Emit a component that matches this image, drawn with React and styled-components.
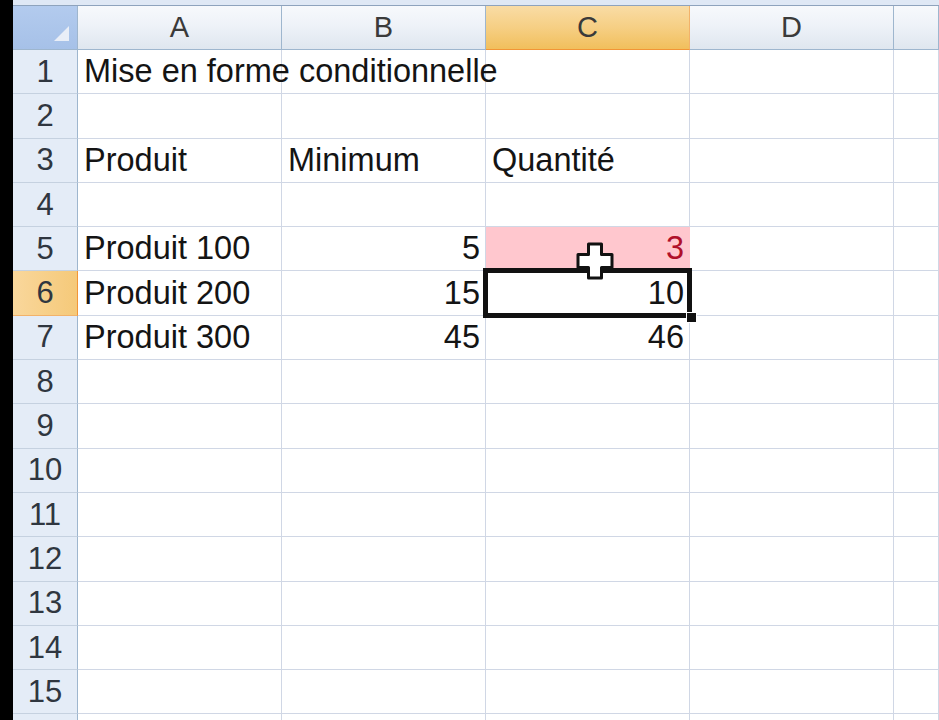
import React from "react"
import styled, { createGlobalStyle, css } from "styled-components"

const GlobalStyle = createGlobalStyle`
  html, body {
    margin: 0;
    padding: 0;
    background: #000;
  }
  body {
    font-family: "Liberation Sans", Arial, sans-serif;
  }
`

const Screen = styled.div`
  width: 939px;
  height: 720px;
  display: flex;
  overflow: hidden;
  background: #000;
`

const Sheet = styled.div`
  flex: 1;
  margin-left: 13px;
  display: flex;
  flex-direction: column;
  background: #fff;
  position: relative;
`

const TopStrip = styled.div`
  flex-shrink: 0;
  height: 5px;
  background: #dfe8f5;
  border-bottom: 1px solid #8ea3bd;
`

const Grid = styled.div`
  flex-shrink: 0;
  display: grid;
  grid-template-columns: 65px 204px 204px 204px 204px 1fr;
  grid-template-rows: 44px repeat(16, 44.3px);
`

const Corner = styled.div`
  background: linear-gradient(#b3cbee, #a6c1e8);
  border-right: 1px solid #9eb6ce;
  border-bottom: 1px solid #9eb6ce;
  position: relative;

  &::after {
    content: "";
    position: absolute;
    right: 8px;
    bottom: 8px;
    width: 0;
    height: 0;
    border-left: 15px solid transparent;
    border-bottom: 15px solid #e9eef7;
  }
`

const ColHead = styled.div`
  display: flex;
  align-items: center;
  justify-content: center;
  font-size: 29px;
  color: #3a3a3a;
  background: linear-gradient(#f7f9fc 0%, #eef2f8 45%, #dfe6ef 100%);
  border-right: 1px solid #9eb6ce;
  border-bottom: 1px solid #9eb6ce;

  ${({ $active }) =>
    $active &&
    css`
      background: linear-gradient(#f9dca5 0%, #f6cf84 50%, #f1bf5c 100%);
      border-bottom-color: #f29536;
      border-right-color: #f2b26a;
    `}
`

const RowHead = styled.div`
  display: flex;
  align-items: center;
  justify-content: center;
  font-size: 31px;
  color: #2f3640;
  background: #e4ecf7;
  border-right: 1px solid #9eb6ce;
  border-bottom: 1px solid #c5d1e0;

  ${({ $active }) =>
    $active &&
    css`
      background: linear-gradient(90deg, #f9d79c, #f5c979);
      border-right-color: #f29536;
      border-bottom-color: #f2b26a;
    `}
`

const Cell = styled.div`
  display: flex;
  align-items: center;
  justify-content: ${({ $num }) => ($num ? "flex-end" : "flex-start")};
  padding: 0 ${({ $num }) => ($num ? "5px" : "0")} 0 ${({ $num }) => ($num ? "0" : "6px")};
  font-size: 32.5px;
  color: #141414;
  white-space: nowrap;
  overflow: visible;
  border-right: 1px solid #d0d7e5;
  border-bottom: 1px solid #d0d7e5;
  position: relative;
  z-index: ${({ $spill }) => ($spill ? 1 : 0)};

  ${({ $alert }) =>
    $alert &&
    css`
      background: #ffc7ce;
      color: #b0102a;
      border-right-color: #ffc7ce;
    `}

  ${({ $selected }) =>
    $selected &&
    css`
      z-index: 2;

      &::after {
        content: "";
        position: absolute;
        left: -3px;
        top: -3px;
        right: -3px;
        bottom: -3px;
        border: 5px solid #111;
        pointer-events: none;
      }
      &::before {
        content: "";
        position: absolute;
        right: -8px;
        bottom: -8px;
        width: 9px;
        height: 9px;
        background: #111;
        border: 1px solid #fff;
        z-index: 2;
      }
    `}
`

const Cursor = styled.svg`
  position: absolute;
  left: 563px;
  top: 242px;
  z-index: 5;
`

const columns = ["A", "B", "C", "D", ""]

const rows = {
  1: [{ text: "Mise en forme conditionnelle", spill: true }],
  3: [{ text: "Produit" }, { text: "Minimum" }, { text: "Quantité" }],
  5: [{ text: "Produit 100" }, { text: "5", num: true }, { text: "3", num: true, alert: true }],
  6: [{ text: "Produit 200" }, { text: "15", num: true }, { text: "10", num: true, selected: true }],
  7: [{ text: "Produit 300" }, { text: "45", num: true }, { text: "46", num: true }],
}

const App = () => (
  <Screen>
    <GlobalStyle />
    <Sheet>
      <TopStrip />
      <Grid>
        <Corner />
        {columns.map((c, i) => (
          <ColHead key={i} $active={c === "C"}>
            {c}
          </ColHead>
        ))}
        {Array.from({ length: 16 }, (_, r) => {
          const n = r + 1
          const data = rows[n] || []
          return (
            <React.Fragment key={n}>
              {/* last row only peeks in at the bottom edge, its label stays below the fold */}
              <RowHead $active={n === 6}>{n < 16 ? n : ""}</RowHead>
              {columns.map((c, i) => {
                const d = data[i] || {}
                return (
                  <Cell
                    key={c + i}
                    $num={d.num}
                    $alert={d.alert}
                    $selected={d.selected}
                    $spill={d.spill}
                  >
                    {d.text}
                  </Cell>
                )
              })}
            </React.Fragment>
          )
        })}
      </Grid>
      <Cursor width="38" height="38" viewBox="0 0 38 38">
        <path
          d="M12.5 2 H25.5 V12.5 H36 V25.5 H25.5 V36 H12.5 V25.5 H2 V12.5 H12.5 Z"
          fill="#fff"
          stroke="#111"
          strokeWidth="3"
          strokeLinejoin="round"
        />
      </Cursor>
    </Sheet>
  </Screen>
)

export default App
